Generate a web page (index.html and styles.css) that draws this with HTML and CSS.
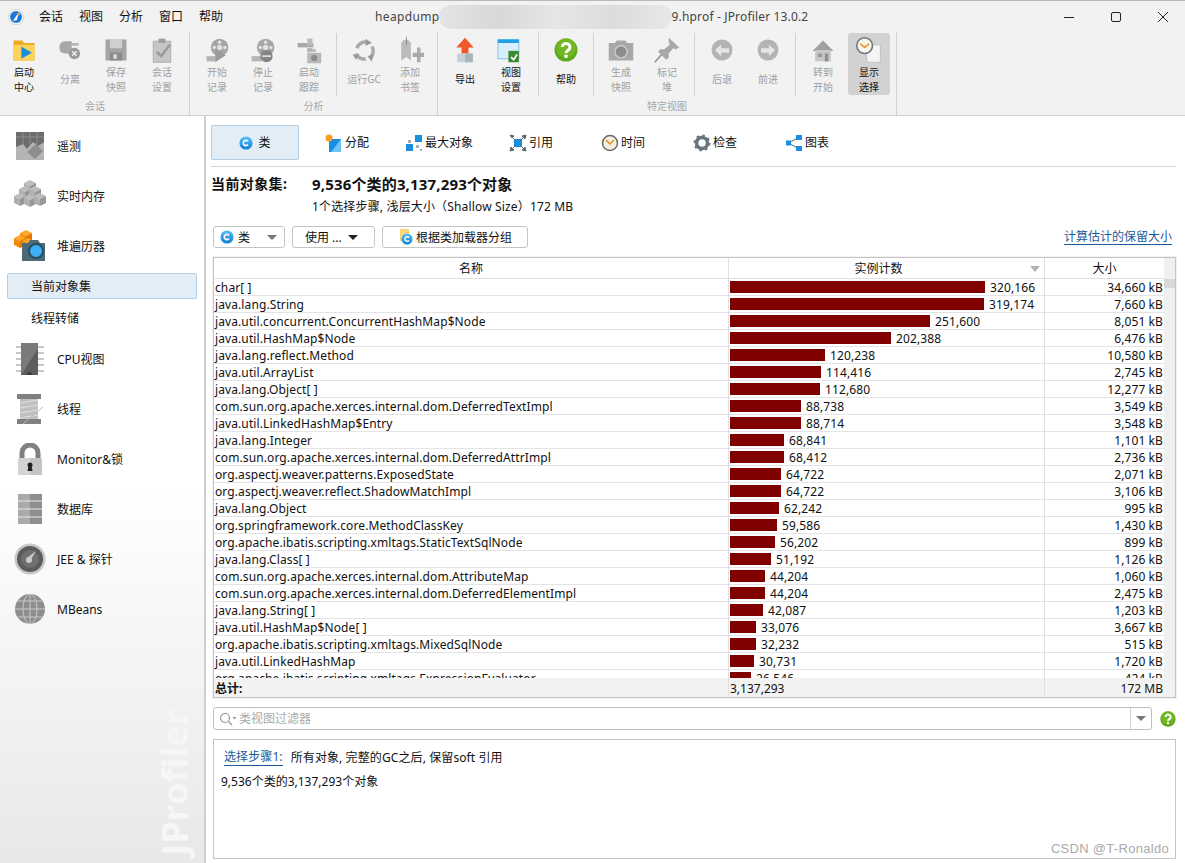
FILE: index.html
```html
<!DOCTYPE html>
<html lang="zh">
<head>
<meta charset="utf-8">
<title>JProfiler 13.0.2</title>
<link rel="stylesheet" href="styles.css">
</head>
<body>
<svg class="defs" width="0" height="0">
  <defs>
    <linearGradient id="ball" x1="0" y1="0" x2="0" y2="1"><stop offset="0" stop-color="#5cc0f5"/><stop offset="1" stop-color="#0a7fd6"/></linearGradient>
    <symbol id="cball" viewBox="0 0 16 16"><circle cx="8" cy="8" r="7.5" fill="url(#ball)"/><path d="M10.3 6.2A3 3 0 1 0 10.3 9.8" fill="none" stroke="#fff" stroke-width="1.8"/></symbol>
    <symbol id="help" viewBox="0 0 24 24"><circle cx="12" cy="12" r="11.5" fill="#5fa81c"/><circle cx="12" cy="10" r="10" fill="#7cc227" opacity=".6"/><path d="M8.3 9a3.8 3.6 0 1 1 5.8 3.1c-1.3.9-2.1 1.4-2.1 3" fill="none" stroke="#fff" stroke-width="3"/><rect x="10.4" y="16.6" width="3.2" height="3.2" fill="#fff"/></symbol>
    <symbol id="cube" viewBox="0 0 12 13" overflow="visible"><path d="M6 0l6 3-6 3-6-3z" fill="#bcbcbc"/><path d="M0 3l6 3v7L0 10z" fill="#b0b0b0"/><path d="M12 3 6 6v7l6-3z" fill="#979797"/></symbol>
    <symbol id="ocube" viewBox="0 0 12 13" overflow="visible"><path d="M6 0l6 3-6 3-6-3z" fill="#ffa726"/><path d="M0 3l6 3v7L0 10z" fill="#f58a00"/><path d="M12 3 6 6v7l6-3z" fill="#e07800"/></symbol>
  </defs>
</svg>

<header class="titlebar">
  <svg class="app-logo" width="16" height="16" viewBox="0 0 16 16"><circle cx="8" cy="8" r="7.6" fill="#fff" stroke="#bbb" stroke-width=".6"/><circle cx="8" cy="8" r="6" fill="#1c78d8"/><path d="M5 12 10.5 3.6 9 11z" fill="#fff"/><circle cx="10.6" cy="5" r="1.6" fill="#f0a030"/></svg>
  <nav class="menu"><span>会话</span><span>视图</span><span>分析</span><span>窗口</span><span>帮助</span></nav>
  <div class="wintitle"><span class="wt1">heapdump</span><span class="blur"></span><span class="wt2">9.hprof - JProfiler 13.0.2</span></div>
  <div class="winbtns">
    <svg width="12" height="12" viewBox="0 0 12 12"><path d="M1 6.500h10" stroke="#222"/></svg>
    <svg width="12" height="12" viewBox="0 0 12 12"><rect x="1.500" y="1.500" width="9" height="9" rx="1.500" fill="none" stroke="#222"/></svg>
    <svg width="12" height="12" viewBox="0 0 12 12"><path d="M1 1l10 10M11 1 1 11" stroke="#222"/></svg>
  </div>
</header>

<section class="toolbar">
  <div class="tgroup">
    <div class="truns"><div class="trun">
      <div class="tool"><svg width="32" height="32" viewBox="0 0 32 32"><path d="M4 5h10l2 3h12v20H4z" fill="#e8a820"/><path d="M4 10h24v18H4z" fill="#fcd25a"/><path d="M13 12l12 7-12 7z" fill="#1a8fe0"/></svg><span class="tl on">启动<br>中心</span></div>
      <div class="tool"><svg width="32" height="32" viewBox="0 0 32 32"><path d="M4 12q0-6 8-6h6v14h-6q-8 0-8-6z" fill="#a8a8a8"/><path d="M18 8h8v3h-8zM18 15h6v3h-6z" fill="#b8b8b8"/><circle cx="21" cy="20" r="6.5" fill="#9a9a9a"/><path d="M18.500 17.500l5 5m0-5-5 5" stroke="#eee" stroke-width="1.800"/></svg><span class="tl">分离</span></div>
      <div class="tool"><svg width="32" height="32" viewBox="0 0 32 32"><path d="M4 4h24v24H4z" fill="#a5a5a5"/><path d="M9 4h14v10H9z" fill="#cfcfcf"/><path d="M9 19h14v9H9z" fill="#8c8c8c"/><path d="M13 21h4v5h-4z" fill="#ddd"/></svg><span class="tl">保存<br>快照</span></div>
      <div class="tool"><svg width="32" height="32" viewBox="0 0 32 32"><path d="M6 6h20v24H6z" fill="#c6c6c6" stroke="#a8a8a8"/><path d="M12 3h8v5h-8z" fill="#a0a0a0"/><path d="M10 18l5 5 10-13" fill="none" stroke="#9a9a9a" stroke-width="3"/></svg><span class="tl">会话<br>设置</span></div>
    </div></div>
    <div class="glabel">会话</div>
  </div>
  <div class="tgroup">
    <div class="truns">
      <div class="trun">
        <div class="tool"><svg width="32" height="32" viewBox="0 0 32 32"><circle cx="19" cy="13" r="10" fill="#a5a5a5"/><circle cx="19" cy="13" r="3" fill="#e2e2e2"/><circle cx="19" cy="7" r="2" fill="#e2e2e2"/><circle cx="25" cy="13" r="2" fill="#e2e2e2"/><circle cx="13" cy="13" r="2" fill="#e2e2e2"/><path d="M4 23h10v6H4z" fill="#b5b5b5"/><path d="M14 14l12 8-12 8z" fill="#9a9a9a"/></svg><span class="tl">开始<br>记录</span></div>
        <div class="tool"><svg width="32" height="32" viewBox="0 0 32 32"><circle cx="19" cy="13" r="10" fill="#a5a5a5"/><circle cx="19" cy="13" r="3" fill="#e2e2e2"/><circle cx="19" cy="7" r="2" fill="#e2e2e2"/><circle cx="25" cy="13" r="2" fill="#e2e2e2"/><circle cx="13" cy="13" r="2" fill="#e2e2e2"/><path d="M3 23h12v6H3z" fill="#b5b5b5"/><circle cx="20" cy="23" r="7" fill="#858585"/><path d="M15 23h10" stroke="#ddd" stroke-width="2"/></svg><span class="tl">停止<br>记录</span></div>
        <div class="tool"><svg width="32" height="32" viewBox="0 0 32 32"><path d="M3 8h18v5H3z" fill="#a8a8a8"/><path d="M14 3h6v8h-6z" fill="#bbb"/><path d="M14 14h6v4h-6z" fill="#aaa"/><path d="M18 15h6v3h-6zM14 19h16v12H14z" fill="#b8b8b8"/><circle cx="22" cy="25" r="3.500" fill="#8a8a8a"/></svg><span class="tl">启动<br>跟踪</span></div>
      </div>
      <div class="trun">
        <div class="tool"><svg width="32" height="32" viewBox="0 0 32 32"><g fill="none" stroke="#aaa" stroke-width="4"><path d="M8 14a9 9 0 0 1 13-6"/><path d="M25 12a9 9 0 0 1-3 13"/><path d="M18 26a9 9 0 0 1-11-6"/></g><path d="M18 3l7 5-7 3zM27 21l-2 8-5-6zM3 21l8 0-4 6z" fill="#999"/></svg><span class="tl">运行GC</span></div>
        <div class="tool"><svg width="32" height="32" viewBox="0 0 32 32"><path d="M6 7q5-6 11 0v21l-5-4-6 4z" fill="#bbb"/><path d="M12 1v9" stroke="#888"/><path d="M19 19h5v-6h4v6h4v5h-4v6h-4v-6h-5z" fill="#aaa"/></svg><span class="tl">添加<br>书签</span></div>
      </div>
    </div>
    <div class="glabel">分析</div>
  </div>
  <div class="tgroup">
    <div class="truns">
      <div class="trun">
        <div class="tool"><svg width="32" height="32" viewBox="0 0 32 32"><path d="M16 2 26 13H20V20H12V13H6z" fill="#f0582a"/><path d="M7 20h18v10H7z" fill="#c4d0d8"/><path d="M16 20h9v10h-9z" fill="#a8b4bc"/></svg><span class="tl on">导出</span></div>
        <div class="tool"><svg width="32" height="32" viewBox="0 0 32 32"><path d="M1 4h24v22H1z" fill="#d7eefb" stroke="#6fc0ee"/><path d="M1 4h24v4H1z" fill="#22a0e6"/><path d="M13 17h12v13H13z" fill="#3c8a34"/><path d="M16 24l3 3 4-6" fill="none" stroke="#fff" stroke-width="2"/></svg><span class="tl on">视图<br>设置</span></div>
      </div>
      <div class="trun">
        <div class="tool"><svg width="24" height="24"><use href="#help"/></svg><span class="tl on">帮助</span></div>
      </div>
      <div class="trun">
        <div class="tool"><svg width="32" height="32" viewBox="0 0 32 32"><path d="M2 8h7l2-3h10l2 3h7v20H2z" fill="#a8a8a8"/><circle cx="16" cy="18" r="7" fill="#8e8e8e" stroke="#d0d0d0" stroke-width="1.500"/></svg><span class="tl">生成<br>快照</span></div>
        <div class="tool"><svg width="32" height="32" viewBox="0 0 32 32"><path d="M18 2l12 11-4 2-3-1-5 6 0 5-3 2-9-9 2-3 5 0 6-5-1-4z" fill="#a8a8a8"/><path d="M10 21 2 30" stroke="#999" stroke-width="2"/></svg><span class="tl">标记<br>堆</span></div>
      </div>
      <div class="trun">
        <div class="tool"><svg width="32" height="32" viewBox="0 0 32 32"><circle cx="16" cy="16" r="12" fill="#b4b4b4"/><path d="M8 16l7-6v4h9v5h-9v4z" fill="#e6e6e6"/></svg><span class="tl">后退</span></div>
        <div class="tool"><svg width="32" height="32" viewBox="0 0 32 32"><circle cx="16" cy="16" r="12" fill="#b4b4b4"/><path d="M24 16l-7-6v4H8v5h9v4z" fill="#e6e6e6"/></svg><span class="tl">前进</span></div>
      </div>
      <div class="trun">
        <div class="tool"><svg width="32" height="32" viewBox="0 0 32 32"><path d="M4 17 16 5l12 12z" fill="#a0a0a0"/><path d="M7 16h18v13H7z" fill="#c8c8c8"/><path d="M18 20h4v9h-4z" fill="#909090"/><path d="M10 20h5v4h-5z" fill="#999"/></svg><span class="tl">转到<br>开始</span></div>
        <div class="tool sel"><svg width="32" height="32" viewBox="0 0 32 32"><path d="M12 10h17v20H14z" fill="#f4f4f4" stroke="#bbb"/><circle cx="11" cy="11" r="9" fill="#f8f4e8" stroke="#6a7680" stroke-width="1.800"/><path d="M6 9l5 4 5-4" fill="none" stroke="#e88a1c" stroke-width="1.500"/></svg><span class="tl on">显示<br>选择</span></div>
      </div>
    </div>
    <div class="glabel">特定视图</div>
  </div>
</section>

<div class="body">
  <aside class="sidebar">
    <div class="wm">JProfiler</div>
    <div class="nav">
      <svg width="32" height="32" viewBox="0 0 32 32"><path d="M2 2h28v28H2z" fill="#b4b4b4"/><path d="M2 2h28v10l-6 4-5-4-6 7-4-5-7 3z" fill="#6c6c6c"/><path d="M2 7h28M9 2v13M16 2v13M23 2v12" stroke="#8c8c8c"/><path d="M13 22l9-8 7 7-8 8z" fill="#8e8e8e"/></svg><span>遥测</span>
    </div>
    <div class="nav">
      <svg width="32" height="32" viewBox="0 0 32 32"><use href="#cube" x="10" y="0" width="12" height="13"/><use href="#cube" x="5" y="6" width="12" height="13"/><use href="#cube" x="15" y="6" width="12" height="13"/><use href="#cube" x="0" y="13" width="12" height="13"/><use href="#cube" x="10" y="14" width="12" height="13"/><use href="#cube" x="20" y="13" width="12" height="13"/></svg><span>实时内存</span>
    </div>
    <div class="nav">
      <svg width="32" height="32" viewBox="0 0 32 32"><use href="#ocube" x="6" y="0" width="12" height="13"/><use href="#ocube" x="0" y="5" width="12" height="13"/><use href="#ocube" x="8" y="8" width="12" height="13"/><path d="M8 13h6l2-3h8l2 3h5v18H8z" fill="#4e6a78"/><circle cx="22" cy="21" r="7" fill="#3cb0f5" stroke="#2c4c5c" stroke-width="2"/></svg><span>堆遍历器</span>
    </div>
    <div class="sub cur">当前对象集</div>
    <div class="sub">线程转储</div>
    <div class="nav">
      <svg width="32" height="32" viewBox="0 0 32 32"><path d="M2 3h6v2H2zM2 9h6v2H2zM2 15h6v2H2zM2 21h6v2H2zM2 27h6v2H2zM24 3h6v2h-6zM24 9h6v2h-6zM24 15h6v2h-6zM24 21h6v2h-6zM24 27h6v2h-6z" fill="#c8c8c8"/><path d="M7 0h17v32H7z" fill="#7a7a7a"/><path d="M7 32 24 6v26z" fill="#5e5e5e"/><circle cx="15.500" cy="32" r="3" fill="#404040"/></svg><span>CPU视图</span>
    </div>
    <div class="nav">
      <svg width="32" height="32" viewBox="0 0 32 32"><path d="M3 1h24v5H3zM3 26h24v5H3z" fill="#808080"/><path d="M6 6h18v20H6z" fill="#c0c0c0"/><path d="M6 10l18-3M6 15l18-3M6 20l18-3M6 25l18-3" stroke="#e0e0e0"/><path d="M9 31 29 14" stroke="#bbb"/></svg><span>线程</span>
    </div>
    <div class="nav">
      <svg width="32" height="32" viewBox="0 0 32 32"><path d="M8 16V10a8 8 0 0 1 16 0v6" fill="none" stroke="#808080" stroke-width="5"/><path d="M4 15h24v17H4z" fill="#d4d4d4"/><path d="M16 15h12v17H16z" fill="#c4c4c4"/><circle cx="16" cy="22" r="2.500" fill="#222"/><path d="M14.500 23h3l1 5h-5z" fill="#222"/></svg><span>Monitor&amp;锁</span>
    </div>
    <div class="nav">
      <svg width="32" height="32" viewBox="0 0 32 32"><path d="M4 1h24v30H4z" fill="#aaa"/><path d="M16 1h12v30H16z" fill="#8e8e8e"/><path d="M4 8h24M4 16h24M4 24h24" stroke="#e8e8e8"/></svg><span>数据库</span>
    </div>
    <div class="nav">
      <svg width="32" height="32" viewBox="0 0 32 32"><circle cx="16" cy="16" r="15.500" fill="#c8c8c8"/><circle cx="16" cy="16" r="13" fill="#5c5c5c"/><circle cx="16" cy="16" r="9" fill="#707070"/><path d="M13 15 22 8l-6 10z" fill="#ccc"/><circle cx="15" cy="17" r="3" fill="#ccc"/></svg><span>JEE &amp; 探针</span>
    </div>
    <div class="nav">
      <svg width="32" height="32" viewBox="0 0 32 32"><circle cx="16" cy="16" r="15" fill="#8e8e8e"/><path d="M16 1v30M1 16h30M4 8h24M4 24h24" stroke="#c8c8c8"/><ellipse cx="16" cy="16" rx="7" ry="15" fill="none" stroke="#c8c8c8"/></svg><span>MBeans</span>
    </div>
  </aside>

  <main class="main">
    <div class="tabs">
      <div class="tab cur"><svg width="14" height="14"><use href="#cball"/></svg>类</div>
      <div class="tab"><svg width="18" height="18" viewBox="0 0 18 18"><path d="M4 5h12v13H4z" fill="#1a8fe0"/><path d="M16 5v13H6z" fill="#6cc4f5"/><circle cx="4" cy="4" r="3.500" fill="#f5a020"/></svg>分配</div>
      <div class="tab"><svg width="18" height="18" viewBox="0 0 18 18"><path d="M10 1h7v7h-7zM1 10h7v7H1z" fill="#1a8fe0"/><path d="M3 6h3v3H3zM11 11h3v3h-3zM15 15h2v2h-2z" fill="#aab"/></svg>最大对象</div>
      <div class="tab"><svg width="18" height="18" viewBox="0 0 18 18"><path d="M5 5h8v8H5z" fill="#1a8fe0"/><path d="M1 1l4 1-2 2zM17 1l-1 4-3-3zM1 17l1-4 3 3zM17 17l-4-1 3-3zM3 3l4 4M15 3l-4 4M3 15l4-4M15 15l-4-4" stroke="#5a6a74" fill="#5a6a74"/></svg>引用</div>
      <div class="tab"><svg width="18" height="18" viewBox="0 0 18 18"><circle cx="9" cy="9" r="7.500" fill="#f4efe0" stroke="#6a6a6a" stroke-width="1.500"/><path d="M5 6l4 4 4-4" fill="none" stroke="#e88a1c" stroke-width="1.500"/></svg>时间</div>
      <div class="tab"><svg width="18" height="18" viewBox="0 0 18 18"><circle cx="9" cy="9" r="5.500" fill="none" stroke="#68757e" stroke-width="3.500"/><circle cx="9" cy="9" r="7.500" fill="none" stroke="#68757e" stroke-width="2" stroke-dasharray="2.500 3.400"/></svg>检查</div>
      <div class="tab"><svg width="18" height="18" viewBox="0 0 18 18"><path d="M3 9 13 4M3 9l10 5" stroke="#5a6a74"/><path d="M1 6.500h5v5H1zM11 1h6v5h-6zM11 12h6v5h-6z" fill="#1a8fe0"/></svg>图表</div>
    </div>

    <div class="summary">
      <b class="s1">当前对象集:</b><b class="s2">9,536个类的3,137,293个对象</b>
      <span></span><span class="subline">1个选择步骤, 浅层大小（Shallow Size）172 MB</span>
    </div>

    <div class="controls">
      <div class="btn b-class"><svg width="14" height="14"><use href="#cball"/></svg><span>类</span><i class="caret grey"></i></div>
      <div class="btn b-use"><span>使用 ...</span><i class="caret"></i></div>
      <div class="btn b-group"><svg width="16" height="18" viewBox="0 0 16 18"><path d="M3 1h9v12H3z" fill="#f8d878"/><circle cx="10" cy="11" r="5.500" fill="url(#ball)"/><path d="M12 9.500a2.300 2.300 0 1 0 0 3" fill="none" stroke="#fff" stroke-width="1.400"/></svg><span>根据类加载器分组</span></div>
      <a class="link calc">计算估计的保留大小</a>
    </div>

    <div class="table">
      <div class="thead">
        <div class="row head">
          <div>名称</div>
          <div class="sorted">实例计数<i class="sortmark"></i></div>
          <div>大小</div>
        </div>
        <div class="corner"></div>
      </div>
      <div class="tmid">
        <div class="tbody">
          <div class="row"><div class="n">char[ ]</div><div class="c"><i style="width:255px"></i>320,166</div><div class="s">34,660 kB</div></div>
          <div class="row"><div class="n">java.lang.String</div><div class="c"><i style="width:254px"></i>319,174</div><div class="s">7,660 kB</div></div>
          <div class="row"><div class="n">java.util.concurrent.ConcurrentHashMap$Node</div><div class="c"><i style="width:200px"></i>251,600</div><div class="s">8,051 kB</div></div>
          <div class="row"><div class="n">java.util.HashMap$Node</div><div class="c"><i style="width:161px"></i>202,388</div><div class="s">6,476 kB</div></div>
          <div class="row"><div class="n">java.lang.reflect.Method</div><div class="c"><i style="width:95px"></i>120,238</div><div class="s">10,580 kB</div></div>
          <div class="row"><div class="n">java.util.ArrayList</div><div class="c"><i style="width:91px"></i>114,416</div><div class="s">2,745 kB</div></div>
          <div class="row"><div class="n">java.lang.Object[ ]</div><div class="c"><i style="width:90px"></i>112,680</div><div class="s">12,277 kB</div></div>
          <div class="row"><div class="n">com.sun.org.apache.xerces.internal.dom.DeferredTextImpl</div><div class="c"><i style="width:71px"></i>88,738</div><div class="s">3,549 kB</div></div>
          <div class="row"><div class="n">java.util.LinkedHashMap$Entry</div><div class="c"><i style="width:71px"></i>88,714</div><div class="s">3,548 kB</div></div>
          <div class="row"><div class="n">java.lang.Integer</div><div class="c"><i style="width:54px"></i>68,841</div><div class="s">1,101 kB</div></div>
          <div class="row"><div class="n">com.sun.org.apache.xerces.internal.dom.DeferredAttrImpl</div><div class="c"><i style="width:54px"></i>68,412</div><div class="s">2,736 kB</div></div>
          <div class="row"><div class="n">org.aspectj.weaver.patterns.ExposedState</div><div class="c"><i style="width:51px"></i>64,722</div><div class="s">2,071 kB</div></div>
          <div class="row"><div class="n">org.aspectj.weaver.reflect.ShadowMatchImpl</div><div class="c"><i style="width:51px"></i>64,722</div><div class="s">3,106 kB</div></div>
          <div class="row"><div class="n">java.lang.Object</div><div class="c"><i style="width:49px"></i>62,242</div><div class="s">995 kB</div></div>
          <div class="row"><div class="n">org.springframework.core.MethodClassKey</div><div class="c"><i style="width:47px"></i>59,586</div><div class="s">1,430 kB</div></div>
          <div class="row"><div class="n">org.apache.ibatis.scripting.xmltags.StaticTextSqlNode</div><div class="c"><i style="width:45px"></i>56,202</div><div class="s">899 kB</div></div>
          <div class="row"><div class="n">java.lang.Class[ ]</div><div class="c"><i style="width:41px"></i>51,192</div><div class="s">1,126 kB</div></div>
          <div class="row"><div class="n">com.sun.org.apache.xerces.internal.dom.AttributeMap</div><div class="c"><i style="width:35px"></i>44,204</div><div class="s">1,060 kB</div></div>
          <div class="row"><div class="n">com.sun.org.apache.xerces.internal.dom.DeferredElementImpl</div><div class="c"><i style="width:35px"></i>44,204</div><div class="s">2,475 kB</div></div>
          <div class="row"><div class="n">java.lang.String[ ]</div><div class="c"><i style="width:33px"></i>42,087</div><div class="s">1,203 kB</div></div>
          <div class="row"><div class="n">java.util.HashMap$Node[ ]</div><div class="c"><i style="width:26px"></i>33,076</div><div class="s">3,667 kB</div></div>
          <div class="row"><div class="n">org.apache.ibatis.scripting.xmltags.MixedSqlNode</div><div class="c"><i style="width:26px"></i>32,232</div><div class="s">515 kB</div></div>
          <div class="row"><div class="n">java.util.LinkedHashMap</div><div class="c"><i style="width:24px"></i>30,731</div><div class="s">1,720 kB</div></div>
          <div class="row"><div class="n">org.apache.ibatis.scripting.xmltags.ExpressionEvaluator</div><div class="c"><i style="width:21px"></i>26,546</div><div class="s">424 kB</div></div>
        </div>
        <div class="scroll"><div class="thumb"></div></div>
      </div>
      <div class="row total"><div class="n">总计:</div><div class="c">3,137,293</div><div class="s">172 MB</div></div>
    </div>

    <div class="filter-row">
      <div class="filter">
        <svg width="18" height="14" viewBox="0 0 18 14"><circle cx="6" cy="6" r="4.500" fill="none" stroke="#999" stroke-width="1.200"/><path d="M9.500 9.500 13 13" stroke="#999" stroke-width="1.200"/><path d="M13.500 5h4l-2 2.500z" fill="#999"/></svg>
        <span class="ph">类视图过滤器</span>
        <div class="fdrop"><i class="caret grey"></i></div>
      </div>
      <svg width="16" height="16"><use href="#help"/></svg>
    </div>

    <div class="steps">
      <div class="stepline"><a class="link">选择步骤1:</a><span>所有对象, 完整的GC之后, 保留soft 引用</span></div>
      <div class="stepsum">9,536个类的3,137,293个对象</div>
      <div class="mark">CSDN @T-Ronaldo</div>
    </div>
  </main>
</div>
</body>
</html>
```
FILE: styles.css
```css
* { box-sizing: border-box; }
html, body { margin: 0; padding: 0; }
body {
  width: 1185px;
  height: 863px;
  overflow: hidden;
  background: #fff;
  color: #111;
  font: 12px/17px "Noto Sans", "Noto Sans CJK SC", sans-serif;
}
.defs { position: absolute; }

.titlebar {
  height: 32px;
  background: #f2f2f2;
  border-top: 1px solid #b8b8b8;
  display: flex;
  align-items: center;
  padding-left: 8px;
  position: relative;
}
.menu { display: flex; gap: 16px; margin-left: 15px; color: #111; }
.wintitle {
  display: flex;
  margin-left: 152px;
  font-size: 12px;
  color: #444;
}
.wt1 { letter-spacing: .35px; }
.wt2 { letter-spacing: .16px; }
.blur {
  width: 233px;
  height: 24px;
  margin: -3px 0 -3px -1px;
  border-radius: 12px;
  background: linear-gradient(90deg, #e4e4e4, #d8d8d8 25%, #e6e6e6 50%, #dcdcdc 75%, #e8e8e8);
}
.winbtns { margin-left: auto; display: flex; gap: 35px; padding-right: 16px; }

.toolbar {
  height: 84px;
  background: #f2f2f2;
  border-bottom: 1px solid #cfcfcf;
  display: flex;
  padding-left: 1px;
}
.tgroup {
  display: flex;
  flex-direction: column;
  align-items: center;
  border-right: 1px solid #d2d2d2;
  padding-right: 0;
}
.truns { display: flex; align-items: flex-start; height: 67px; padding-top: 1px; }
.trun { display: flex; height: 63px; padding: 0 4px; border-right: 1px solid #d2d2d2; }
.trun:first-child { padding-left: 4px; }
.trun:last-child { border-right: 0; }
.tgroup:first-child .trun { padding-left: 0; }
.tool {
  width: 46px;
  height: 62px;
  display: flex;
  flex-direction: column;
  align-items: center;
  border-radius: 3px;
}
.tool svg { margin-top: 3px; height: 28px; flex: none; }
.tl {
  flex: 1;
  display: flex;
  align-items: center;
  text-align: center;
  font-size: 10px;
  line-height: 15px;
  color: #a0a0a0;
}
.tl.on { color: #111; }
.tool.sel { background: #d2d2d2; width: 42px; margin: 0 2px; }
.glabel { font-size: 10px; line-height: 14px; color: #a8a8a8; }

.body { display: flex; height: 747px; }

.sidebar {
  position: relative;
  width: 206px;
  flex: none;
  padding-top: 5px;
  border-right: 2px solid #cfcfcf;
  background: linear-gradient(#fff 0, #fff 50%, #e8e8e8 100%);
}
.nav { height: 50px; display: flex; align-items: center; gap: 11px; padding-left: 14px; }
.nav svg { flex: none; }
.sub { height: 31px; margin-left: 7px; width: 190px; padding-left: 24px; display: flex; align-items: center; }
.sub.cur { height: 26px; margin-top: 2px; margin-bottom: 4px; background: #e3edf6; border: 1px solid #b4cfe4; border-radius: 2px; padding-left: 23px; }
.wm {
  position: absolute;
  right: 10px;
  bottom: 7px;
  writing-mode: vertical-rl;
  transform: rotate(180deg);
  font: bold 36px/38px "Open Sans", sans-serif;
  color: #f6f6f6;
}

.main { flex: 1; min-width: 0; padding: 9px 9px 0 5px; display: flex; flex-direction: column; }
.tabs { display: flex; gap: 4px; padding-bottom: 6px; border-bottom: 1px solid #d4d4d4; }
.tab {
  width: 88px;
  height: 35px;
  display: flex;
  align-items: center;
  justify-content: center;
  gap: 2px;
  border: 1px solid transparent;
  border-radius: 2px;
  font-size: 12px;
}
.tab.cur { background: #e3edf6; border-color: #b4cfe4; gap: 5px; }
.summary {
  display: grid;
  grid-template-columns: 101px 1fr;
  margin-top: 8px;
  row-gap: 5px;
}
.summary b { line-height: 18px; }
.s1 { font-size: 14px; letter-spacing: .4px; }
.s2 { font-size: 15px; letter-spacing: .16px; }
.subline { line-height: 17px; letter-spacing: .16px; }

.controls { display: flex; align-items: center; gap: 7px; margin: 11px 0 0 2px; height: 22px; }
.btn {
  height: 22px;
  border: 1px solid #c4c4c4;
  border-radius: 3px;
  background: #fff;
  display: flex;
  align-items: center;
}
.b-class { width: 72px; padding-left: 6px; gap: 4px; }
.b-class .caret { margin-left: auto; margin-right: 7px; }
.b-use { width: 83px; padding-left: 12px; gap: 6px; }
.b-group { width: 146px; padding-left: 14px; gap: 3px; }
.caret { width: 0; height: 0; border: 5px solid transparent; border-top: 5px solid #222; border-bottom: 0; display: block; }
.caret.grey { border-top-color: #777; }
.link { color: #1a5a9a; border-bottom: 1px solid #1a5a9a; line-height: 15px; }
.calc { margin-left: auto; margin-right: 4px; }

.table {
  margin-top: 9px;
  margin-left: 2px;
  width: 963px;
  height: 441px;
  border: 1px solid #c4c4c4;
  outline: 1px solid #f2f2f2;
  display: flex;
  flex-direction: column;
  background: #fff;
}
.thead { display: flex; height: 21px; flex: none; }
.corner { flex: 1; background: #f0f0f0; }
.row { display: grid; grid-template-columns: 515px 316px 119px; width: 950px; }
.row > div { border-right: 1px solid #e0e0e0; }
.row > div:last-child { border-right: 0; }
.head { height: 21px; border-bottom: 1px solid #e0e0e0; text-align: center; line-height: 22px; }
.sorted { position: relative; padding-right: 16px; }
.sortmark {
  position: absolute;
  right: 4px;
  top: 8px;
  border: 5px solid transparent;
  border-top: 6px solid #b4b4b4;
  border-bottom: 0;
}
.tmid { flex: 1; min-height: 0; display: flex; }
.tbody { width: 950px; overflow: hidden; }
.tbody .row { height: 17px; border-bottom: 1px solid #e4e4e4; line-height: 18px; letter-spacing: .1px; }
.n { padding-left: 1px; white-space: nowrap; overflow: hidden; }
.c { display: flex; align-items: flex-start; gap: 5px; padding-left: 1px; }
.c i { display: block; height: 12px; margin-top: 2px; background: #800000; }
.s { text-align: right; padding-right: 1px; }
.scroll { flex: 1; background: #f0f0f0; }
.thumb { height: 9px; background: #d8d8d8; }
.total { height: 19px; background: #f2f2f2; width: 961px; line-height: 21px; }
.total .n { font-weight: bold; }
.total .s { padding-right: 12px; }
.total { grid-template-columns: 515px 316px 130px; }

.filter-row { display: flex; align-items: center; gap: 8px; margin: 9px 0 0 2px; }
.filter {
  width: 941px;
  height: 23px;
  border: 1px solid #c0c0c0;
  border-radius: 3px;
  display: flex;
  align-items: center;
  padding-left: 5px;
  gap: 2px;
}
.ph { color: #aaa; }
.fdrop {
  margin-left: auto;
  width: 21px;
  height: 100%;
  border-left: 1px solid #d0d0d0;
  display: flex;
  align-items: center;
  justify-content: center;
}
.steps {
  position: relative;
  margin: 9px 0 0 2px;
  width: 963px;
  height: 120px;
  border: 1px solid #c4c4c4;
  padding: 9px 7px;
}
.stepline { display: flex; gap: 8px; padding-left: 3px; letter-spacing: .1px; }
.stepsum { margin-top: 7px; }
.mark {
  position: absolute;
  right: 6px;
  bottom: 1px;
  font-size: 13px;
  color: #aaa;
  font-family: "Liberation Sans", sans-serif;
  letter-spacing: .3px;
}
```
